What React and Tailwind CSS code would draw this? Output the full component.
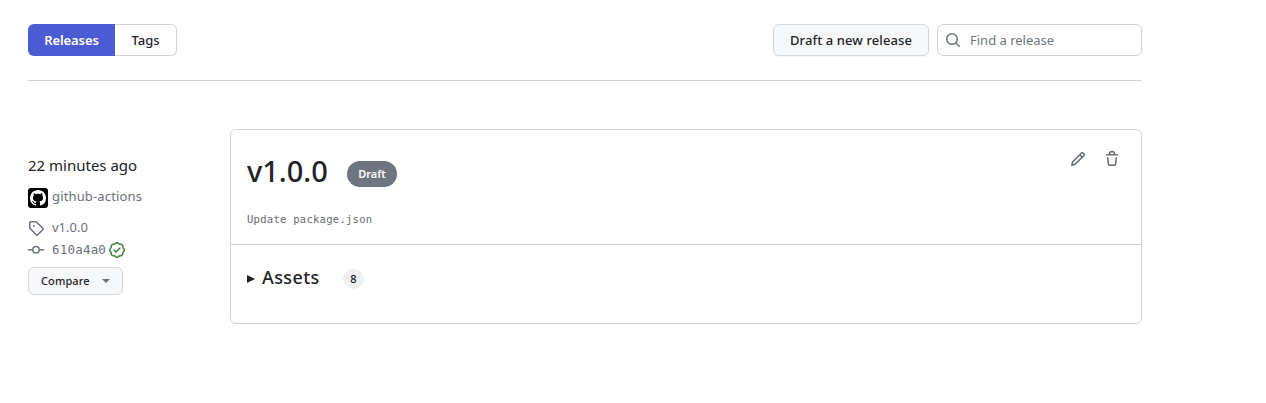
const ICONS = {
  search: "M10.68 11.74a6 6 0 0 1-7.922-8.982 6 6 0 0 1 8.982 7.922l3.04 3.04a.749.749 0 0 1-.326 1.275.749.749 0 0 1-.734-.215ZM11.5 7a4.499 4.499 0 1 0-8.997 0A4.499 4.499 0 0 0 11.5 7Z",
  pencil: "M11.013 1.427a1.75 1.75 0 0 1 2.474 0l1.086 1.086a1.75 1.75 0 0 1 0 2.474l-8.61 8.61c-.21.21-.47.364-.756.445l-3.251.93a.75.75 0 0 1-.927-.928l.929-3.25c.081-.286.235-.547.445-.758l8.61-8.61Zm.176 4.823L9.75 4.81l-6.286 6.287a.253.253 0 0 0-.064.108l-.558 1.953 1.953-.558a.253.253 0 0 0 .108-.064Zm1.238-3.763a.25.25 0 0 0-.354 0L10.811 3.75l1.439 1.44 1.263-1.263a.25.25 0 0 0 0-.354Z",
  trash: "M11 1.75V3h2.25a.75.75 0 0 1 0 1.5H2.75a.75.75 0 0 1 0-1.5H5V1.75C5 .784 5.784 0 6.75 0h2.5C10.216 0 11 .784 11 1.75ZM4.496 6.675l.66 6.6a.25.25 0 0 0 .249.225h5.19a.25.25 0 0 0 .249-.225l.66-6.6a.75.75 0 0 1 1.492.149l-.66 6.6A1.748 1.748 0 0 1 10.595 15h-5.19a1.75 1.75 0 0 1-1.741-1.575l-.66-6.6a.75.75 0 1 1 1.492-.15ZM6.5 1.75V3h3V1.75a.25.25 0 0 0-.25-.25h-2.5a.25.25 0 0 0-.25.25Z",
  tag: "M1 7.775V2.75C1 1.784 1.784 1 2.75 1h5.025c.464 0 .91.184 1.238.513l6.25 6.25a1.75 1.75 0 0 1 0 2.474l-5.026 5.026a1.75 1.75 0 0 1-2.474 0l-6.25-6.25A1.752 1.752 0 0 1 1 7.775Zm1.5 0c0 .066.026.13.073.177l6.25 6.25a.25.25 0 0 0 .354 0l5.025-5.025a.25.25 0 0 0 0-.354l-6.25-6.25a.25.25 0 0 0-.177-.073H2.75a.25.25 0 0 0-.25.25ZM6 5a1 1 0 1 1 0 2 1 1 0 0 1 0-2Z",
  commit: "M11.93 8.5a4.002 4.002 0 0 1-7.86 0H.75a.75.75 0 0 1 0-1.5h3.32a4.002 4.002 0 0 1 7.86 0h3.32a.75.75 0 0 1 0 1.5Zm-1.43-.75a2.5 2.5 0 1 0-5 0 2.5 2.5 0 0 0 5 0Z",
  verified: "m9.585.52.929.68c.153.112.331.186.518.215l1.138.175a2.678 2.678 0 0 1 2.24 2.24l.174 1.139c.029.187.103.365.215.518l.68.928a2.677 2.677 0 0 1 0 3.17l-.68.928a1.174 1.174 0 0 0-.215.518l-.175 1.138a2.678 2.678 0 0 1-2.241 2.241l-1.138.175a1.17 1.17 0 0 0-.518.215l-.928.68a2.677 2.677 0 0 1-3.17 0l-.928-.68a1.174 1.174 0 0 0-.518-.215L3.83 14.41a2.678 2.678 0 0 1-2.24-2.24l-.175-1.138a1.17 1.17 0 0 0-.215-.518l-.68-.928a2.677 2.677 0 0 1 0-3.17l.68-.928c.112-.153.186-.331.215-.518l.175-1.14a2.678 2.678 0 0 1 2.24-2.24l1.139-.175c.187-.029.365-.103.518-.215l.928-.68a2.677 2.677 0 0 1 3.17 0ZM7.303 1.728l-.927.68a2.67 2.67 0 0 1-1.18.489l-1.137.174a1.179 1.179 0 0 0-.987.987l-.174 1.136a2.677 2.677 0 0 1-.489 1.18l-.68.928a1.18 1.18 0 0 0 0 1.394l.68.927c.256.348.424.753.489 1.18l.174 1.137c.078.509.478.909.987.987l1.136.174a2.67 2.67 0 0 1 1.18.489l.928.68c.414.305.979.305 1.394 0l.927-.68a2.67 2.67 0 0 1 1.18-.489l1.137-.174a1.18 1.18 0 0 0 .987-.987l.174-1.136a2.67 2.67 0 0 1 .489-1.18l.68-.928a1.176 1.176 0 0 0 0-1.394l-.68-.927a2.686 2.686 0 0 1-.489-1.18l-.174-1.137a1.179 1.179 0 0 0-.987-.987l-1.136-.174a2.677 2.677 0 0 1-1.18-.489l-.928-.68a1.176 1.176 0 0 0-1.394 0ZM11.28 6.78l-3.75 3.75a.75.75 0 0 1-1.06 0L4.72 8.78a.751.751 0 0 1 .018-1.042.751.751 0 0 1 1.042-.018L7 8.94l3.22-3.22a.751.751 0 0 1 1.042.018.751.751 0 0 1 .018 1.042Z",
  github: "M8 0c4.42 0 8 3.58 8 8a8.013 8.013 0 0 1-5.45 7.59c-.4.08-.55-.17-.55-.38 0-.27.01-1.13.01-2.2 0-.75-.25-1.23-.54-1.48 1.78-.2 3.65-.88 3.65-3.95 0-.88-.31-1.59-.82-2.15.08-.2.36-1.02-.08-2.12 0 0-.67-.22-2.2.82-.64-.18-1.32-.27-2-.27-.68 0-1.36.09-2 .27-1.53-1.03-2.2-.82-2.2-.82-.44 1.1-.16 1.92-.08 2.12-.51.56-.82 1.28-.82 2.15 0 3.06 1.86 3.75 3.64 3.95-.23.2-.44.55-.51 1.07-.46.21-1.61.55-2.33-.66-.15-.24-.6-.83-1.23-.82-.67.01-.27.38.01.53.34.19.73.9.82 1.13.16.45.68 1.31 2.69.94 0 .67.01 1.3.01 1.49 0 .21-.15.45-.55.38A7.995 7.995 0 0 1 0 8c0-4.42 3.58-8 8-8Z",
};

function Icon({ name, className = "size-4" }) {
  return (
    <svg viewBox="0 0 16 16" fill="currentColor" aria-hidden="true" className={`shrink-0 ${className}`}>
      <path d={ICONS[name]} />
    </svg>
  );
}

function Toolbar() {
  return (
    <header className="flex h-[57px] items-start justify-between border-b border-[#d0d3d9]">
      <nav className="flex h-8 text-[13px] leading-5">
        <a className="flex w-[87px] items-center justify-center rounded-l-md bg-[#4a5bd4] font-semibold text-white">
          <span className="tracking-[-0.1px]">Releases</span>
        </a>
        <a className="flex w-[62px] items-center justify-center rounded-r-md border border-l-0 border-[#d0d3dc] font-medium">
          Tags
        </a>
      </nav>
      <div className="flex gap-2">
        <button className="flex h-8 w-[156px] items-center justify-center whitespace-nowrap rounded-md border border-[#d5d8da] bg-[#f6f8fa] pt-0.5 text-[13px] font-medium tracking-[0.1px] shadow-[0_1px_0_rgba(31,35,40,0.04)]">
          Draft a new release
        </button>
        <label className="flex h-8 w-[205px] items-center rounded-md border border-[#d0d3dc] pl-[7px] text-[#6e7781]">
          <Icon name="search" />
          <span className="pl-[9px] pt-0.5 text-[13px]">Find a release</span>
        </label>
      </div>
    </header>
  );
}

function ReleaseMeta() {
  return (
    <aside className="flex w-[202px] flex-col items-start pt-[25px] text-[13px] text-[#6b717b]">
      <div className="h-[22px] text-[15px] leading-[22px] text-[#1f2328]">22 minutes ago</div>
      <div className="mt-[11px] flex h-5 items-center gap-1">
        <span className="mt-px flex size-5 items-center justify-center rounded-[3px] bg-black text-white">
          <Icon name="github" />
        </span>
        <span className="tracking-[0.15px]">github-actions</span>
      </div>
      <div className="mt-[11px] flex h-5 items-center gap-2">
        <Icon name="tag" />
        <span>v1.0.0</span>
      </div>
      <div className="mt-[2px] flex h-5 items-center">
        <Icon name="commit" />
        <span className="pl-2 pr-[3px] font-['DejaVu_Sans_Mono',monospace] text-[12.5px] tracking-[0.2px]">610a4a0</span>
        <Icon name="verified" className="size-4 text-[#3d8236]" />
      </div>
      <button className="mt-[7px] flex h-7 w-[95px] items-center justify-between rounded-md border border-[#d5d8da] bg-[#f6f8fa] pl-3 pr-3 text-[11px] font-medium tracking-[0.1px] text-[#1f2328]">
        Compare
        <span className="border-x-4 border-t-4 border-x-transparent border-t-[#6b717b]" />
      </button>
    </aside>
  );
}

function ReleaseCard() {
  return (
    <section className="h-[195px] w-[912px] rounded-md border border-[#d0d3dc]">
      <div className="flex h-[115px] justify-between border-b border-[#d0d3dc] pl-4 pr-[21px]">
        <div>
          <div className="mt-5 flex h-[42px] items-center">
            <h1 className="w-[100px] text-[29px] font-medium leading-[42px]">v1.0.0</h1>
            <span className="mt-[5px] flex h-[26px] w-[50px] items-center justify-center rounded-full bg-[#6e7580] pt-px text-[11px] font-semibold text-white">
              Draft
            </span>
          </div>
          <pre className="mt-[19px] font-['DejaVu_Sans_Mono',monospace] text-[10.5px] leading-4 tracking-[0.28px] text-[#656b74]">Update package.json</pre>
        </div>
        <div className="mt-[21px] flex h-4 gap-[18px] text-[#656b74]">
          <Icon name="pencil" />
          <Icon name="trash" />
        </div>
      </div>
      <div className="mt-[17px] flex h-[30px] items-center pl-4">
        <span className="mt-1 border-y-[4.5px] border-l-8 border-y-transparent border-l-[#1f2328]" />
        <h2 className="w-[88px] pl-[7px] text-[18px] font-medium tracking-[0.4px]">Assets</h2>
        <span className="mt-1 flex h-5 w-[21px] items-center justify-center rounded-full bg-[#eef0f2] pt-px text-[11px] font-medium">8</span>
      </div>
    </section>
  );
}

export default function App() {
  return (
    <main className="h-[403px] w-[1266px] bg-white pl-7 pt-6 font-['Noto_Sans','Open_Sans',sans-serif] text-[#1f2328]">
      <div className="w-[1114px]">
        <Toolbar />
        <div className="mt-12 flex">
          <ReleaseMeta />
          <ReleaseCard />
        </div>
      </div>
    </main>
  );
}
